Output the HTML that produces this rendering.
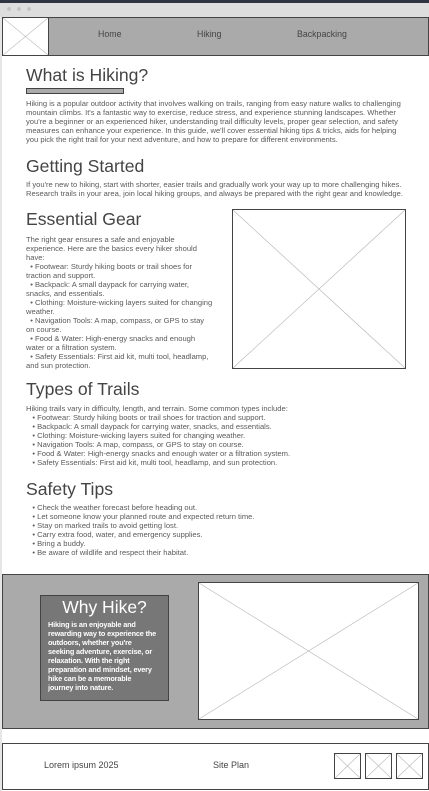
<!DOCTYPE html>
<html><head><meta charset="utf-8"><style>
*{margin:0;padding:0;box-sizing:border-box}
body{width:429px;height:791px;background:#fff;font-family:"Liberation Sans",sans-serif;color:#555;position:relative;overflow:hidden}
.a{position:absolute}
.h{position:absolute;left:26px;font-size:17.6px;color:#444;white-space:nowrap;line-height:20px}
.t{position:absolute;left:26px;font-size:7.6px;line-height:9px;white-space:nowrap;color:#5a5a5a}
.x{position:absolute;border:1px solid #444;background:#fff}
.x svg{position:absolute;left:0;top:0;width:100%;height:100%}
</style></head><body>
<div class="a" style="left:0;top:0;width:429px;height:3px;background:#2f3540"></div>
<div class="a" style="left:0;top:3px;width:429px;height:14px;background:#ddd"></div>
<div class="a" style="left:7px;top:7px;width:4px;height:4px;border-radius:2px;background:#c4c4c4"></div>
<div class="a" style="left:17px;top:7px;width:4px;height:4px;border-radius:2px;background:#c4c4c4"></div>
<div class="a" style="left:27px;top:7px;width:4px;height:4px;border-radius:2px;background:#c4c4c4"></div>
<div class="a" style="left:0;top:17px;width:2px;height:774px;background:#e6e6e6"></div>
<div class="a" style="left:2px;top:17px;width:427px;height:39px;background:#aaa;border:1px solid #444"></div>
<div class="x" style="left:2px;top:17px;width:47px;height:39px"><svg viewBox="0 0 47 39" preserveAspectRatio="none"><path d="M0 0L47 39M47 0L0 39" stroke="#bbb" stroke-width="0.7"/></svg></div>
<div class="a" style="left:98px;top:29px;font-size:8.8px;color:#444">Home</div>
<div class="a" style="left:197px;top:29px;font-size:8.8px;color:#444">Hiking</div>
<div class="a" style="left:297px;top:29px;font-size:8.8px;color:#444">Backpacking</div>

<div class="h" style="top:65px">What is Hiking?</div>
<div class="a" style="left:26px;top:88px;width:98px;height:6px;background:#aaa;border:1px solid #444"></div>
<div class="t" style="top:99px">Hiking is a popular outdoor activity that involves walking on trails, ranging from easy nature walks to challenging<br>mountain climbs. It's a fantastic way to exercise, reduce stress, and experience stunning landscapes. Whether<br>you're a beginner or an experienced hiker, understanding trail difficulty levels, proper gear selection, and safety<br>measures can enhance your experience. In this guide, we'll cover essential hiking tips &amp; tricks, aids for helping<br>you pick the right trail for your next adventure, and how to prepare for different environments.</div>

<div class="h" style="top:156px">Getting Started</div>
<div class="t" style="top:180px">If you're new to hiking, start with shorter, easier trails and gradually work your way up to more challenging hikes.<br>Research trails in your area, join local hiking groups, and always be prepared with the right gear and knowledge.</div>

<div class="h" style="top:209px">Essential Gear</div>
<div class="t" style="top:235px">The right gear ensures a safe and enjoyable<br>experience. Here are the basics every hiker should<br>have:<br>&nbsp;&nbsp;• Footwear: Sturdy hiking boots or trail shoes for<br>traction and support.<br>&nbsp;&nbsp;• Backpack: A small daypack for carrying water,<br>snacks, and essentials.<br>&nbsp;&nbsp;• Clothing: Moisture-wicking layers suited for changing<br>weather.<br>&nbsp;&nbsp;• Navigation Tools: A map, compass, or GPS to stay<br>on course.<br>&nbsp;&nbsp;• Food &amp; Water: High-energy snacks and enough<br>water or a filtration system.<br>&nbsp;&nbsp;• Safety Essentials: First aid kit, multi tool, headlamp,<br>and sun protection.</div>
<div class="x" style="left:232px;top:209px;width:174px;height:160px"><svg viewBox="0 0 174 160" preserveAspectRatio="none"><path d="M0 0L174 160M174 0L0 160" stroke="#bbb" stroke-width="0.7"/></svg></div>

<div class="h" style="top:379px">Types of Trails</div>
<div class="t" style="top:404px">Hiking trails vary in difficulty, length, and terrain. Some common types include:<br>&nbsp;&nbsp;&nbsp;• Footwear: Sturdy hiking boots or trail shoes for traction and support.<br>&nbsp;&nbsp;&nbsp;• Backpack: A small daypack for carrying water, snacks, and essentials.<br>&nbsp;&nbsp;&nbsp;• Clothing: Moisture-wicking layers suited for changing weather.<br>&nbsp;&nbsp;&nbsp;• Navigation Tools: A map, compass, or GPS to stay on course.<br>&nbsp;&nbsp;&nbsp;• Food &amp; Water: High-energy snacks and enough water or a filtration system.<br>&nbsp;&nbsp;&nbsp;• Safety Essentials: First aid kit, multi tool, headlamp, and sun protection.</div>

<div class="h" style="top:479px">Safety Tips</div>
<div class="t" style="top:503px">&nbsp;&nbsp;&nbsp;• Check the weather forecast before heading out.<br>&nbsp;&nbsp;&nbsp;• Let someone know your planned route and expected return time.<br>&nbsp;&nbsp;&nbsp;• Stay on marked trails to avoid getting lost.<br>&nbsp;&nbsp;&nbsp;• Carry extra food, water, and emergency supplies.<br>&nbsp;&nbsp;&nbsp;• Bring a buddy.<br>&nbsp;&nbsp;&nbsp;• Be aware of wildlife and respect their habitat.</div>

<div class="a" style="left:2px;top:574px;width:427px;height:155px;background:#aaa;border:1px solid #444"></div>
<div class="a" style="left:40px;top:595px;width:129px;height:106px;background:#777;border:1px solid #444"></div>
<div class="a" style="left:40px;top:597px;width:129px;text-align:center;font-size:17.5px;color:#fff">Why Hike?</div>
<div class="a" style="left:48px;top:620px;font-size:7.3px;line-height:9px;color:#fff;font-weight:bold;white-space:nowrap;letter-spacing:-0.15px">Hiking is an enjoyable and<br>rewarding way to experience the<br>outdoors, whether you're<br>seeking adventure, exercise, or<br>relaxation. With the right<br>preparation and mindset, every<br>hike can be a memorable<br>journey into nature.</div>
<div class="x" style="left:198px;top:582px;width:221px;height:138px"><svg viewBox="0 0 221 138" preserveAspectRatio="none"><path d="M0 0L221 138M221 0L0 138" stroke="#bbb" stroke-width="0.7"/></svg></div>

<div class="a" style="left:2px;top:743px;width:427px;height:47px;border:1px solid #444;background:#fff"></div>
<div class="a" style="left:44px;top:760px;font-size:9px;color:#444">Lorem ipsum 2025</div>
<div class="a" style="left:213px;top:760px;font-size:9px;color:#444">Site Plan</div>
<div class="x" style="left:334px;top:753px;width:27px;height:26px"><svg viewBox="0 0 27 26" preserveAspectRatio="none"><path d="M0 0L27 26M27 0L0 26" stroke="#bbb" stroke-width="0.7"/></svg></div>
<div class="x" style="left:365px;top:753px;width:27px;height:26px"><svg viewBox="0 0 27 26" preserveAspectRatio="none"><path d="M0 0L27 26M27 0L0 26" stroke="#bbb" stroke-width="0.7"/></svg></div>
<div class="x" style="left:396px;top:753px;width:27px;height:26px"><svg viewBox="0 0 27 26" preserveAspectRatio="none"><path d="M0 0L27 26M27 0L0 26" stroke="#bbb" stroke-width="0.7"/></svg></div>
</body></html>
